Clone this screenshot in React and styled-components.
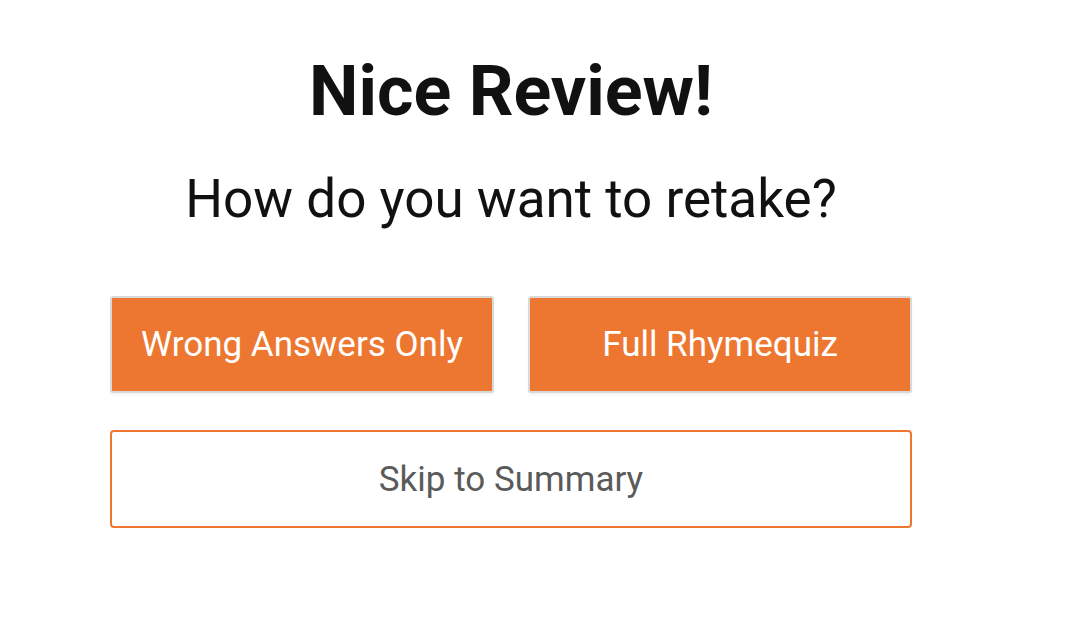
import styled, { createGlobalStyle } from "styled-components";

const Global = createGlobalStyle`
  body {
    margin: 0;
    background: #fff;
    font-family: Roboto, "Liberation Sans", sans-serif;
  }
`;

const Page = styled.div`
  width: 802px;
  margin-left: 110px;
  padding-top: 49px;
  display: flex;
  flex-direction: column;
  align-items: center;
`;

const Title = styled.h1`
  margin: 0;
  font-size: 70px;
  line-height: 84px;
  font-weight: 700;
  color: #111;
`;

const Subtitle = styled.h2`
  margin: 34px 0 0;
  font-size: 53px;
  line-height: 64px;
  font-weight: 400;
  color: #111;
`;

const Row = styled.div`
  margin-top: 65px;
  width: 100%;
  display: grid;
  grid-template-columns: 1fr 1fr;
  gap: 34px;
`;

const Button = styled.button`
  height: 97px;
  width: 100%;
  box-sizing: border-box;
  font-family: Roboto, "Liberation Sans", sans-serif;
  font-size: 35px;
  cursor: pointer;
  border-radius: 3px;
  background: ${(p) => (p.$outline ? "#fff" : "#ed7731")};
  color: ${(p) => (p.$outline ? "#5a5a5a" : "#fff")};
  border: 2px solid ${(p) => (p.$outline ? "#ed7731" : "#d9d9d9")};
  box-shadow: ${(p) => (p.$outline ? "none" : "0 2px 3px rgba(0,0,0,0.05)")};
`;

const Skip = styled(Button)`
  margin-top: 37px;
  height: 98px;
  border-radius: 4px;
`;

export default function App() {
  return (
    <>
      <Global />
      <Page>
        <Title>Nice Review!</Title>
        <Subtitle>How do you want to retake?</Subtitle>
        <Row>
          <Button>Wrong Answers Only</Button>
          <Button>Full Rhymequiz</Button>
        </Row>
        <Skip $outline>Skip to Summary</Skip>
      </Page>
    </>
  );
}
